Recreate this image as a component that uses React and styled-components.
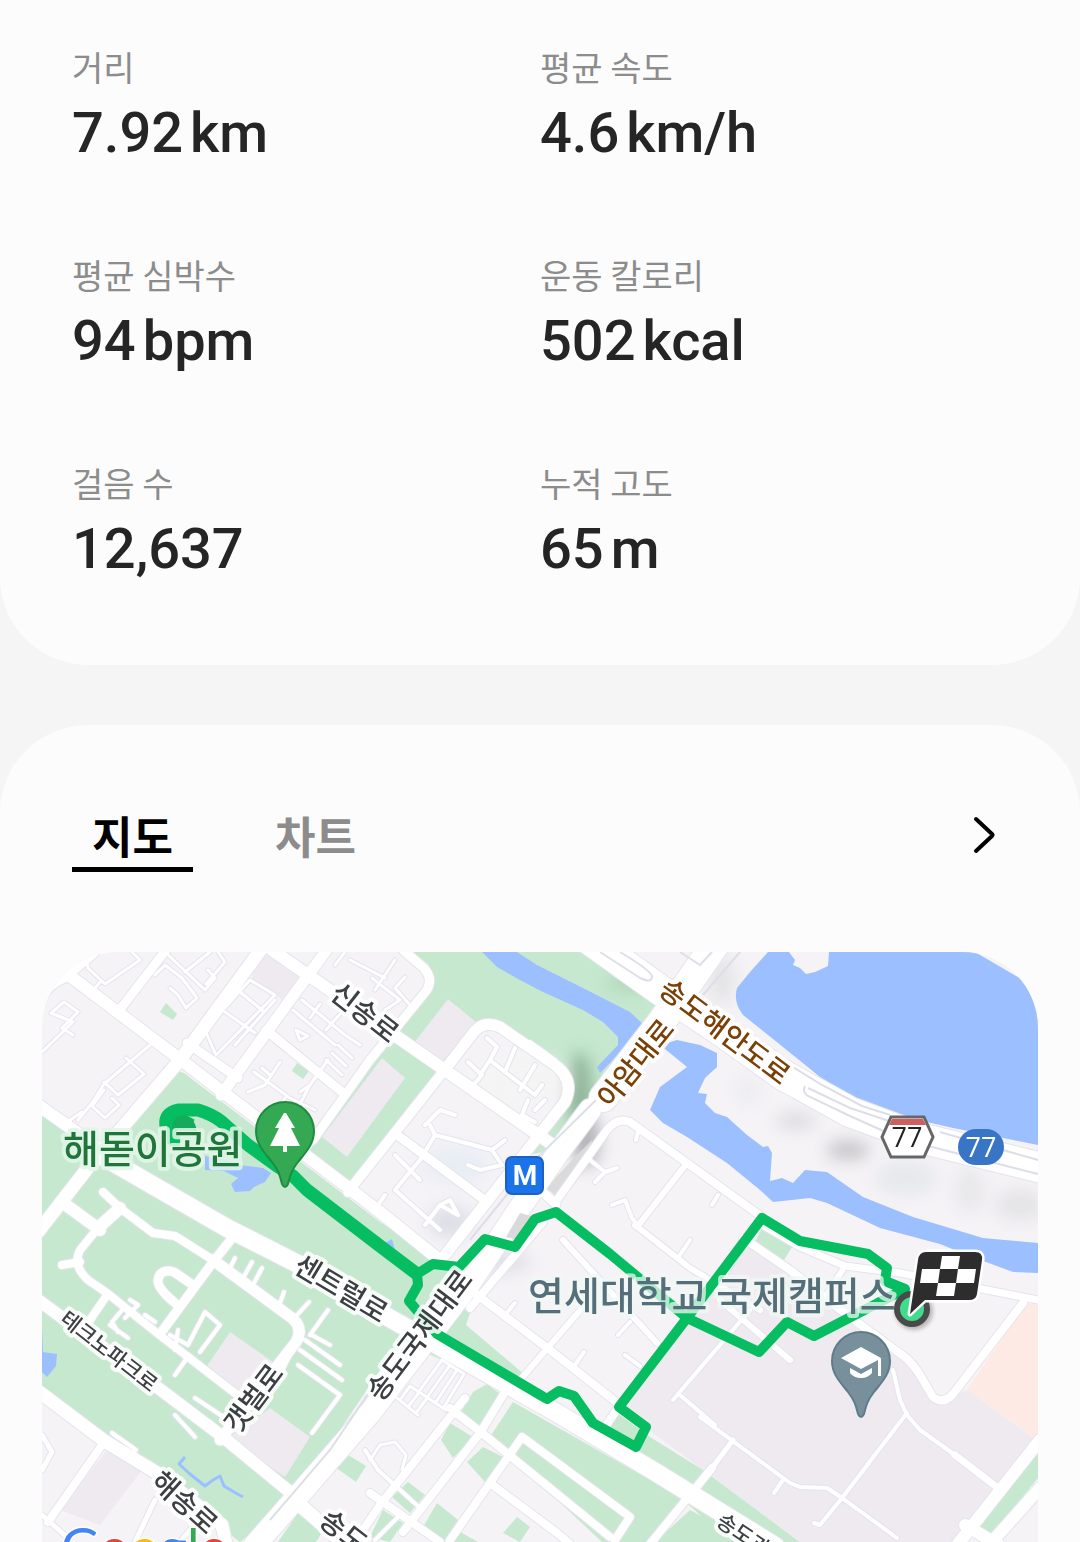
import React, { useState } from 'react';
import styled, { createGlobalStyle } from 'styled-components';

const GlobalStyle = createGlobalStyle`
    * {
        box-sizing:border-box;
    }

    body {
        margin:0;
        background-color:#f5f5f5;
        font-family:'Noto Sans CJK KR', 'Noto Sans', sans-serif;
        color:#252525;
    }
`

const Page = styled.main`
    display:flex;
    flex-direction:column;
    gap:60px;
`

const SummaryCard = styled.section`
    padding:47px 72px 80px;
    border-radius:0 0 88px 88px;
    background-color:#fcfcfc;
`

const StatGrid = styled.dl`
    display:grid;
    grid-template-columns:1fr 1fr;
    row-gap:86px;
    margin:0;
`

const Stat = styled.div`
    display:flex;
    flex-direction:column;
    gap:10px;
`

const StatLabel = styled.dt`
    font-size:34px;
    line-height:40px;
    color:#8c8c8c;
`

const StatValue = styled.dd`
    display:flex;
    align-items:baseline;
    gap:7px;
    margin:0;
    font-family:Roboto, 'Noto Sans CJK KR', sans-serif;
    font-size:56px;
    font-weight:500;
    line-height:72px;
`

const RouteCard = styled.section`
    padding-top:78px;
    border-radius:88px 88px 0 0;
    background-color:#fcfcfc;
`

const TabBar = styled.div`
    display:flex;
    align-items:flex-start;
    gap:62px;
    padding:0 72px;
`

const Tab = styled.button`
    padding:0 20px;
    border:0;
    border-bottom:5px solid ${props => props.$active ? '#000' : 'transparent'};
    background:none;
    font-family:inherit;
    font-size:44px;
    font-weight:700;
    line-height:64px;
    color:${props => props.$active ? '#000' : '#8c8c8c'};
    cursor:pointer;
`

const MoreButton = styled.button`
    display:flex;
    align-items:center;
    justify-content:center;
    width:48px;
    height:64px;
    margin-left:auto;
    padding:0;
    border:0;
    background:none;
    cursor:pointer;
`

const MapFrame = styled.div`
    margin:80px 42px 0;
    border-radius:76px 76px 0 0;
    overflow:hidden;
`

const MapSvg = styled.svg`
    display:block;
    width:100%;
    height:auto;
    background-color:#f6f3f7;
`

const MapLabel = styled.text`
    font-size:${props => props.$size}px;
    font-weight:500;
    fill:${props => props.$color || '#3c4043'};
    stroke:${props => props.$halo || 'rgba(255,255,255,.85)'};
    stroke-width:8px;
    stroke-linejoin:round;
    paint-order:stroke;
`

const ShieldText = styled.text`
    font-family:'Open Sans', sans-serif;
    font-size:27px;
    fill:${props => props.$color};
`

const LogoText = styled.text`
    font-family:Lato, sans-serif;
    font-size:53px;
    stroke:#fff;
    stroke-width:3px;
    paint-order:stroke;
`

const stats = [
    { id:1, label:'거리', value:'7.92', unit:'km' },
    { id:2, label:'평균 속도', value:'4.6', unit:'km/h' },
    { id:3, label:'평균 심박수', value:'94', unit:'bpm' },
    { id:4, label:'운동 칼로리', value:'502', unit:'kcal' },
    { id:5, label:'걸음 수', value:'12,637' },
    { id:6, label:'누적 고도', value:'65', unit:'m' }
];

/** 녹지 */
const parks = [
    '405,952 590,952 655,1005 552,1150 345,1195 310,1150 385,1040 430,980',
    '42,1110 118,1150 155,1087 172,1070 184,1073 380,1222 445,1262 475,1298 466,1325 525,1375 508,1392 400,1340 300,1490 240,1542 42,1390',
    '458,1417 473,1392 487,1384 500,1394 477,1430',
    '513,1402 682,1498 655,1542 602,1542 490,1437',
    '450,1423 473,1437 453,1458 441,1440',
    '483,1447 503,1457 485,1482 467,1462',
    '408,1482 425,1495 410,1513 392,1497',
    '437,1503 458,1520 445,1540 423,1527',
    '383,1510 403,1523 390,1542 370,1537',
    '517,1517 530,1527 520,1542 503,1533',
    '460,1532 478,1542 450,1542',
    '613,1410 650,1437 703,1470 800,1542 730,1542 600,1425',
    '690,1510 750,1542 655,1542',
    '340,1450 366,1466 356,1482 335,1467',
    '300,1510 330,1520 316,1542 278,1542',
    '1038,1450 1038,1478 985,1542 972,1535',
    '166,1003 177,1014 173,1020 160,1012',
    '297,1063 309,1071 303,1079 292,1071',
    '428,1167 445,1177 440,1184 426,1173',
    '762,1228 792,1247 783,1262 755,1242',
    '785,1290 820,1312 806,1324 788,1312'
];

/** 시가지 블록 */
const blocks = [
    { fill:'#eeeaef', points:'252,966 268,955 306,980 287,1003 253,980' },
    { fill:'#eeeaef', points:'448,999 476,1022 442,1062 414,1043' },
    { fill:'#eeeaef', points:'382,1058 405,1078 347,1157 322,1137' },
    { fill:'#f6f3f7', points:'443,1072 478,1030 500,1026 560,1072 570,1087 540,1137 445,1250 350,1190' },
    { fill:'#eeeaef', points:'230,1332 273,1362 246,1396 207,1366' },
    { fill:'#eeeaef', points:'270,1408 310,1437 285,1477 228,1438' },
    { fill:'#eeeaef', points:'107,1450 142,1470 100,1525 60,1510' },
    { fill:'#eeeaef', points:'738,1240 850,1317 913,1363 940,1400 967,1390 1038,1441 960,1542 800,1542 703,1470 618,1407 687,1320' },
    { fill:'#fdeae4', points:'1025,1305 1038,1303 1038,1440 967,1390' }
];

/** 수역 */
const waters = [
    'M768 952 L750 972 L737 988 Q733 1002 743 1015 L783 1047 L820 1077 L860 1102 L887 1113 L953 1128 L1038 1145 V1007 L1028 983 L975 952 H829 L828 966 L815 972 L806 974 L800 968 L793 965 L795 960 L789 952 Z',
    'M482 952 L497 967 L520 980 L543 992 L583 1010 L603 1022 L618 1037 L618 1045 L597 1067 L600 1073 L610 1063 L630 1040 L644 1025 L630 1012 L583 988 L537 965 L517 952 Z',
    'M660 1045 L677 1040 L700 1045 L717 1053 L717 1067 L705 1078 L698 1093 L707 1094 L705 1103 L715 1113 L727 1117 L747 1135 L763 1147 L768 1146 L772 1153 L770 1181 L782 1178 L793 1183 L805 1170 L827 1172 L863 1197 L913 1217 L983 1238 L1038 1243 V1273 L1013 1272 L967 1255 L940 1244 L880 1228 L827 1203 L810 1198 L773 1202 L760 1190 L727 1163 L687 1137 L663 1123 L650 1110 L660 1087 L687 1067 Z',
    'M205 1156 L225 1160 L240 1165 L263 1168 L271 1173 L265 1182 L254 1187 L250 1191 L235 1192 L231 1184 L238 1178 L224 1171 L205 1170 Z',
    'M42 1328 L43 1352 L57 1354 L56 1366 L47 1377 L42 1372 Z',
    'M385 1243 L392 1239 L395 1250 Z'
];

const streams = [
    'M185 1457 L179 1464 L190 1474 L205 1486 L213 1480 L220 1476 L224 1486 L234 1492 L243 1497'
];

/** 도로 : w 는 굵기 */
const roads = [
    { w:3, d:'M85 952 L88 968 L105 984 L140 960 L132 952 M100 982 L92 992 M155 975 L165 965 L182 978 L197 998 L186 1008 L178 995 L170 988 M165 952 L205 990 L215 978 L208 970 M185 972 L210 952 M218 952 L225 962 L206 984' },
    { w:3, d:'M42 1052 L73 1022 L51 1013 L64 1002 L78 1012 L62 1028 L73 1035 M78 1120 L92 1103 L104 1084 L150 1045 M126 1058 L144 1074 L118 1095 L104 1082 M104 1090 L92 1106 L105 1118 L119 1105 L112 1098 M70 1120 L82 1112' },
    { w:3, d:'M205 1030 L250 980 L275 995 L216 1055 Z M225 1012 L255 1033 M240 992 L262 1010 M235 1045 L275 1000 M302 1000 L345 1035 M293 1010 L335 1045 M310 1018 L320 1004 M326 1030 L340 1014 M300 1040 L296 1030 L308 1036 Z M345 1035 L360 1045 M338 1045 L352 1058 M332 1053 L346 1066 M326 1060 L342 1075' },
    { w:3, d:'M280 1062 L265 1085 L248 1092 M254 1072 L290 1098 L315 1110 M270 1075 L262 1068 M285 1098 L278 1110 M300 1092 L310 1085 M328 1060 L310 1085 L300 1104' },
    { w:3, d:'M350 960 L385 978 M375 990 L395 960 M405 977 L395 988 L410 1005 M335 965 L345 952 M372 978 L400 1000 L385 1010' },
    { w:4, d:'M468 1062 L482 1075 L475 1083 M487 1038 L497 1047 L490 1060 L480 1075 M490 1060 L505 1072 L515 1048 M505 1072 L535 1095 L542 1085 M520 1090 L535 1065 M528 1100 L522 1115 L535 1122 M545 1100 L535 1110' },
    { w:4, d:'M425 1125 L440 1110 L455 1115 M430 1125 L435 1135 L462 1142 L492 1150 L502 1165 L480 1170 L468 1165 M435 1135 L420 1160 L395 1190 M492 1150 L505 1140 M395 1155 L420 1180 M385 1195 L378 1205 M395 1190 L440 1230 M440 1205 L425 1225 M440 1205 L458 1215 L450 1200 Z' },
    { w:4, d:'M590 1160 L605 1172 L595 1182 M605 1172 L617 1168 M612 1205 L625 1200 L632 1218 L640 1228 M636 1140 L638 1132 M690 1240 L680 1255 M712 1205 L718 1195 M505 1315 L515 1303 M618 1335 L630 1322 M575 1365 L584 1352 M625 1355 L640 1366 M715 1290 L740 1252' },
    { w:3, d:'M420 1390 L442 1360 M428 1396 L450 1365 M436 1402 L457 1370 M444 1407 L464 1374 M442 1360 L464 1374 M400 1400 L410 1386 M408 1407 L420 1391 M416 1413 L428 1397 M397 1398 L418 1415 M410 1386 L446 1410' },
    { w:3, d:'M370 1460 L380 1445 L395 1442 L406 1455 L402 1470' },
    { w:4, d:'M110 1325 L128 1338 M122 1310 L112 1322 L118 1332 M130 1300 L138 1305 L125 1318 M145 1315 L155 1322 M170 1335 L188 1345 L205 1312 L220 1325 L200 1352 M175 1350 L178 1330 M175 1375 L187 1358 M195 1398 L225 1418 M230 1268 L235 1258 M243 1278 L252 1262 M254 1283 L262 1268 M280 1303 L284 1292 M297 1315 L309 1302 M175 1415 L195 1437' },
    { w:4, d:'M305 1340 L340 1365 M300 1350 L342 1380 M298 1365 L340 1395 L312 1433 M312 1335 L330 1345 M290 1355 L280 1375 M328 1310 L310 1335 M365 1450 L378 1470 L420 1508 M400 1515 L375 1540 M112 1433 L136 1450 L130 1456' },
    { w:5, d:'M42 1435 L52 1452 L42 1470 M42 1515 L68 1538 M155 1500 L135 1542 M190 1530 L180 1542' },
    { w:4, d:'M700 1417 L790 1483 L800 1487 L827 1488 L842 1498 L897 1538 M907 1413 L842 1498 L820 1525 L814 1523 M783 1480 L774 1493 M673 1400 L690 1380 L750 1310 M680 1395 L715 1425 M893 1370 L900 1400 L907 1415 L920 1430 L955 1455' },
    { w:7, d:'M955 1455 L998 1488' },
    { w:5, d:'M733 1440 L712 1468' },
    { w:6, d:'M687 1163 L637 1227 M635 1225 L690 1268 L760 1310 M563 1240 L657 1343 M583 1307 L520 1380 M720 1300 L790 1360' },
    { w:8, d:'M557 1200 L607 1130 Q617 1117 630 1122 L687 1163 L762 1217' },
    { w:8, d:'M743 1238 L790 1270 L850 1317 L905 1357 Q914 1365 920 1375 L933 1397 Q943 1405 953 1394 L1023 1303' },
    { w:7, d:'M762 1225 L800 1247 L845 1266 L900 1273 L1038 1300' },
    { w:6, d:'M845 1266 L820 1305' },
    { w:12, d:'M1040 1440 L958 1544' },
    { w:12, d:'M1040 1488 L990 1544' },
    { w:12, d:'M965 1525 L1000 1546' },
    { w:8, d:'M468 1288 L550 1350 L620 1405 M620 1405 L603 1430 M543 1222 L470 1308' },
    { w:8, d:'M505 1392 L480 1433 L403 1532 M450 1408 L487 1437 L610 1537 M522 1437 L450 1540 M522 1437 L630 1517 L615 1540 M490 1483 L557 1533 L570 1544 M370 1493 L440 1542 M465 1398 L380 1505 L355 1542 M712 1468 L650 1544' },
    { w:12, d:'M42 962 L62 970 L177 1057 L380 1212 L437 1258' },
    { w:9, d:'M95 952 L65 978 Q45 985 40 1005' },
    { w:9, d:'M118 1012 L166 950' },
    { w:9, d:'M187 1043 L238 1078' },
    { w:13, d:'M262 948 L180 1060 L90 1165 L38 1232' },
    { w:11, d:'M328 948 L221 1095' },
    { w:9, d:'M266 1030 L342 1092' },
    { w:12, d:'M272 950 L560 1150' },
    { w:9, d:'M403 950 L424 968 Q434 980 426 991 L370 1060 L313 1140' },
    { w:10, d:'M443 1072 L348 1192' },
    { w:11, d:'M443 1072 L474 1032 Q484 1020 500 1027 L555 1065 Q575 1080 565 1102 L445 1255' },
    { w:4, d:'M530 1042 L555 1060' },
    { w:9, d:'M400 1137 L487 1202' },
    { w:9, d:'M540 1190 L556 1204' },
    { w:12, d:'M38 1105 L123 1165 M62 1202 L100 1230 M120 1208 L98 1228' },
    { w:8, d:'M103 1192 L120 1208 L153 1233 L175 1236 L213 1260 M98 1228 L80 1250 Q72 1265 88 1280 L107 1293 L157 1333 L240 1397 M62 1265 L80 1262 M107 1295 L90 1320' },
    { w:9, d:'M233 1237 L213 1262 L163 1330 M190 1283 L174 1272 Q160 1268 158 1280 Q157 1288 175 1303' },
    { w:11, d:'M213 1260 L292 1318 Q304 1328 296 1342 L220 1440' },
    { w:12, d:'M38 1300 L157 1387 L223 1437 L290 1492' },
    { w:13, d:'M38 1391 L103 1440 L157 1473 L222 1525 L226 1544' },
    { w:8, d:'M102 1445 L48 1522' },
    { w:18, d:'M95 1152 L227 1228 L300 1265 L370 1307 L437 1345 L557 1413 L657 1473 L775 1546' },
    { w:14, d:'M300 1505 L345 1544' },
    { w:22, d:'M590 1110 L560 1150 L517 1212 L470 1283 L370 1413 L297 1497 L254 1546' },
    { w:30, d:'M590 940 L660 990 L720 1030 L783 1075 L850 1112 L920 1138 L1042 1168' },
    { w:28, d:'M725 930 L663 1020 L603 1098' }
];

/** 큰 도로 위의 차선 */
const lanes = [
    'M600 952 L640 978 Q652 984 652 976 Q650 970 620 952',
    'M680 952 L700 965 L712 952',
    'M703 995 L740 952',
    'M783 1061 L822 1085 L862 1106 L890 1115 M940 1132 L1038 1160',
    'M805 1086 Q802 1092 808 1096 L850 1116 L890 1134 M928 1146 L1038 1174',
    'M808 1088 L850 1108 L892 1122',
    'M596 1100 L535 1160 L470 1240',
    'M374 1385 L330 1450 L270 1520'
];

/** 구불구불한 이동 경로 */
const trackThick = 'M166 1126 Q164 1113 178 1110 L198 1110 Q212 1114 222 1122 L248 1145 L277 1166 L293 1176 L307 1190 L380 1246 L417 1274';
const trackLine = 'M180 1141 L172 1141 L172 1125 Q180 1116 192 1124 M417 1274 L433 1264 L459 1267 L485 1239 L515 1247 L535 1219 L556 1212 L610 1254 L687 1318 L759 1352 L787 1322 L814 1336 L905 1289 L885 1281 L887 1268 L868 1254 L800 1241 L762 1218 L687 1318 L619 1407 L646 1427 L636 1447 L593 1423 L574 1396 L559 1391 L547 1399 L437 1334 L409 1301 L418 1285 L417 1274';

const labels = [
    { text:'신송로', x:366, y:1011, angle:38, size:28 },
    { text:'센트럴로', x:342, y:1287, angle:31, size:28 },
    { text:'테크노파크로', x:110, y:1350, angle:38, size:21 },
    { text:'갯벌로', x:252, y:1397, angle:-53, size:28 },
    { text:'송도국제대로', x:418, y:1334, angle:-53, size:28 },
    { text:'해송로', x:186, y:1501, angle:42, size:28 },
    { text:'송도', x:345, y:1530, angle:38, size:28 },
    { text:'송도과학로', x:760, y:1544, angle:34, size:21 },
    { text:'송도해안도로', x:726, y:1030, angle:37, size:28, color:'#7a4006' },
    { text:'아암대로', x:634, y:1062, angle:-51, size:28, color:'#7a4006' }
];

function ParkPin() {
    return (
        <g>
            <path d="M285 1102 a29 29 0 0 1 29 29 c0 13 -8 21 -16 31 c-7 9 -8 14 -10 22 q-3 6 -6 0 c-2 -8 -3 -13 -10 -22 c-8 -10 -16 -18 -16 -31 a29 29 0 0 1 29 -29 z" fill="#34a853" stroke="#1f8b3d" strokeWidth="2" />
            <path d="M284 1113 h2 l9 15 h-4 l9 18 h-13 v6 h-4 v-6 h-13 l9 -18 h-4 z" fill="#fff" />
        </g>
    )
}

function SchoolPin() {
    return (
        <g>
            <path d="M861 1332 a29 29 0 0 1 29 29 c0 13 -8 21 -16 31 c-7 9 -8 14 -10 22 q-3 6 -6 0 c-2 -8 -3 -13 -10 -22 c-8 -10 -16 -18 -16 -31 a29 29 0 0 1 29 -29 z" fill="#78909c" stroke="#5f7c8a" strokeWidth="2" />
            <path d="M861 1347 l20 11 v18 h-3 v-16 l-17 9 l-20 -11 z" fill="#fff" />
            <path d="M850 1368 l11 6 l11 -6 v5 q-4 5 -11 5 q-7 0 -11 -5 z" fill="#fff" />
        </g>
    )
}

function FinishFlag() {
    return (
        <g>
            <circle cx="914" cy="1311" r="19" fill="#000" opacity=".25" filter="url(#soft)" />
            <circle cx="912" cy="1309" r="15" fill="#3fdc8c" stroke="#4a4a4a" strokeWidth="6" />
            <path d="M926 1252 h49 q8 0 7 8 l-5 34 q-1 6 -8 6 h-44 l-15 14 l8 -54 q1 -8 8 -8 z" fill="none" stroke="#fff" strokeWidth="5" strokeLinejoin="round" />
            <path d="M926 1252 h49 q8 0 7 8 l-5 34 q-1 6 -8 6 h-44 l-15 14 l8 -54 q1 -8 8 -8 z" fill="#2d2d2d" />
            <path d="M942 1256 h18 l-2 13 h18 l-2 14 h-18 l-2 13 h-18 l2 -13 h-18 l2 -14 h18 z" fill="#fff" />
            <path d="M940 1269 h18 l-2 14 h-18 z" fill="#2d2d2d" />
        </g>
    )
}

function RouteMap() {
    return (
        <MapSvg viewBox="42 952 996 590" role="img" aria-label="이동 경로 지도">
            <defs>
                <filter id="soft" x="-50%" y="-50%" width="200%" height="200%">
                    <feGaussianBlur stdDeviation="2" />
                </filter>
                <filter id="haze" x="-20%" y="-20%" width="140%" height="140%">
                    <feGaussianBlur stdDeviation="8" />
                </filter>
            </defs>

            {parks.map(points => <polygon key={points} points={points} fill="#c5e8cf" />)}
            {blocks.map(block => <polygon key={block.points} points={block.points} fill={block.fill} />)}

            <g filter="url(#haze)">
                <ellipse cx="580" cy="1092" rx="12" ry="40" fill="#7fa58b" opacity=".8" />
                <ellipse cx="630" cy="982" rx="22" ry="10" fill="#a9cfb3" opacity=".7" />
                <ellipse cx="748" cy="1090" rx="12" ry="16" fill="#ececef" />
                <ellipse cx="796" cy="1121" rx="20" ry="9" fill="#dcdcde" />
                <ellipse cx="848" cy="1150" rx="22" ry="10" fill="#c6c6c8" />
                <ellipse cx="906" cy="1178" rx="32" ry="18" fill="#e6e9ec" />
                <ellipse cx="970" cy="1190" rx="16" ry="24" fill="#e8e8ea" />
                <ellipse cx="1020" cy="1205" rx="26" ry="16" fill="#e4e4e6" />
                <ellipse cx="520" cy="1080" rx="50" ry="24" fill="#f4f4f4" />
                <ellipse cx="455" cy="1165" rx="34" ry="20" fill="#e8edf4" />
                <ellipse cx="450" cy="1222" rx="22" ry="16" fill="#dddfe6" />
                <ellipse cx="505" cy="1262" rx="26" ry="10" fill="#dddfe3" />
                <ellipse cx="586" cy="1140" rx="14" ry="28" fill="#b4b4b8" />
                <ellipse cx="722" cy="980" rx="14" ry="26" fill="#e4e4e6" />
            </g>
            <path d="M572 1160 L592 1140 L588 1166 L562 1200 L546 1188 Z" fill="#dadada" />

            {waters.map(d => <path key={d} d={d} fill="#9cc0ff" />)}
            {streams.map(d => <path key={d} d={d} fill="none" stroke="#9cc0ff" strokeWidth="3" strokeLinejoin="round" />)}

            <g fill="none" stroke="#e4e4ec" strokeLinejoin="round" strokeLinecap="round">
                {roads.map(road => <path key={road.d} d={road.d} strokeWidth={road.w + 2} />)}
            </g>
            <g fill="none" stroke="#fff" strokeLinejoin="round" strokeLinecap="round">
                {roads.map(road => <path key={road.d} d={road.d} strokeWidth={road.w} />)}
            </g>
            <g fill="none" stroke="#dedee8" strokeWidth="2">
                {lanes.map(d => <path key={d} d={d} />)}
            </g>

            <path d="M520 1213 L531 1216 L518 1240 L506 1237 Z" fill="#dadada" />

            <g fill="none" stroke="#07bd62" strokeLinejoin="round">
                <path d={trackThick} strokeWidth="13" />
                <path d={trackLine} strokeWidth="10" />
            </g>
            <path d="M172 1130 Q172 1116 184 1115 Q195 1118 197 1131 Z" fill="#15ab5c" />

            {labels.map(label => (
                <MapLabel
                    key={label.text}
                    $size={label.size}
                    $color={label.color}
                    textAnchor="middle"
                    dominantBaseline="central"
                    transform={`translate(${label.x} ${label.y}) rotate(${label.angle})`}
                >
                    {label.text}
                </MapLabel>
            ))}
            <MapLabel x="63" y="1163" $size={39} $color="#20753a" $halo="rgba(225,246,231,.85)">해돋이공원</MapLabel>
            <MapLabel x="528" y="1310" $size={39} $color="#546e7a" $halo="rgba(240,248,244,.75)">연세대학교 국제캠퍼스</MapLabel>

            <ParkPin />
            <SchoolPin />

            <rect x="506" y="1157" width="37" height="37" rx="6" fill="#1a73e8" stroke="#1b62c4" strokeWidth="2" />
            <text x="525" y="1185" textAnchor="middle" fontFamily="Roboto, sans-serif" fontSize="28" fontWeight="700" fill="#fff">M</text>

            <path d="M891 1117 H924 L933 1137 L924 1157 H891 L882 1137 Z" fill="#fff" stroke="#666" strokeWidth="3" />
            <path d="M892 1119 H923 L926 1125 H889 Z" fill="#cf5f5f" />
            <ShieldText x="907" y="1147" textAnchor="middle" $color="#222">77</ShieldText>
            <rect x="958" y="1129" width="46" height="36" rx="18" fill="#3875c5" />
            <ShieldText x="981" y="1157" textAnchor="middle" $color="#fff">77</ShieldText>

            <FinishFlag />

            <LogoText x="61" y="1566">
                <tspan fill="#4285f4">G</tspan>
                <tspan fill="#ea4335">o</tspan>
                <tspan fill="#fbbc05">o</tspan>
                <tspan fill="#4285f4">g</tspan>
                <tspan fill="#34a853">l</tspan>
                <tspan fill="#ea4335">e</tspan>
            </LogoText>
        </MapSvg>
    )
}

function App() {

    const [tab, setTab] = useState('map');

    return (
        <>
            <GlobalStyle />
            <Page>
                <SummaryCard>
                    <StatGrid>
                        {stats.map(stat => (
                            <Stat key={stat.id}>
                                <StatLabel>{stat.label}</StatLabel>
                                <StatValue>
                                    <span>{stat.value}</span>
                                    {stat.unit && <span>{stat.unit}</span>}
                                </StatValue>
                            </Stat>
                        ))}
                    </StatGrid>
                </SummaryCard>

                <RouteCard>
                    <TabBar>
                        <Tab type="button" $active={tab === 'map'} onClick={() => setTab('map')}>지도</Tab>
                        <Tab type="button" $active={tab === 'chart'} onClick={() => setTab('chart')}>차트</Tab>
                        <MoreButton type="button" aria-label="더보기">
                            <svg width="24" height="40" viewBox="0 0 24 40" fill="none" stroke="#000" strokeWidth="4" strokeLinecap="round" strokeLinejoin="round">
                                <path d="M4 4 L20 19 Q21 20 20 21 L4 36" />
                            </svg>
                        </MoreButton>
                    </TabBar>
                    <MapFrame>
                        {tab === 'map' && <RouteMap />}
                    </MapFrame>
                </RouteCard>
            </Page>
        </>
    )
}

export default App;
